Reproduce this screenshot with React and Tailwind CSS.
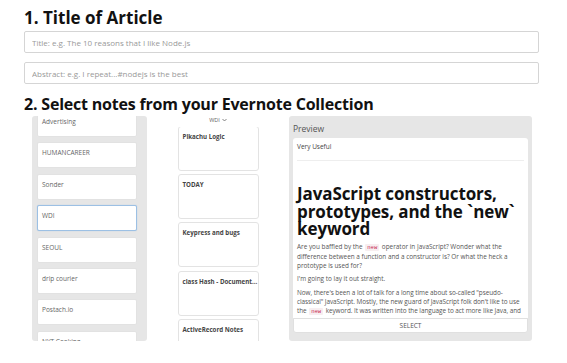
import React from "react";

const NOTEBOOKS = [
  "Advertising",
  "HUMANCAREER",
  "Sonder",
  "WDI",
  "SEOUL",
  "drip courier",
  "Postach.io",
  "NYT Cooking",
];

const NOTES = [
  "Pikachu Logic",
  "TODAY",
  "Keypress and bugs",
  "class Hash - Document...",
  "ActiveRecord Notes",
];

const font = { fontFamily: '"Open Sans", "Noto Sans", sans-serif' };

function Code({ children }) {
  return (
    <code className="px-[2px] mx-[1px] rounded-[1px] bg-[#f7eef0] text-[#c7254e] text-[5.5px] font-['Liberation_Mono',monospace]">
      {children}
    </code>
  );
}

export default function App() {
  return (
    <div className="w-[567px] h-[363px] bg-white overflow-hidden" style={font}>
      <div className="pl-[24px] w-[539px] pt-[7px]">
        <h1 className="text-[17px] leading-[22px] font-bold text-[#111]">1. Title of Article</h1>
        <input
          className="block mt-[2px] w-full h-[22px] border border-[#d5d5d5] rounded-[2px] px-[7px] text-[8px] text-[#555] placeholder:text-[#999] outline-none"
          placeholder="Title: e.g. The 10 reasons that I like Node.js"
        />
        <input
          className="block mt-[9px] w-full h-[22px] border border-[#d5d5d5] rounded-[2px] px-[7px] text-[8px] text-[#555] placeholder:text-[#999] outline-none"
          placeholder="Abstract: e.g. I repeat...#nodejs is the best"
        />
        <h2 className="mt-[9px] text-[16px] leading-[22px] font-bold text-[#111] tracking-[-0.2px]">
          2. Select notes from your Evernote Collection
        </h2>

        <div className="flex mt-[1px] h-[225px]">
          {/* notebooks */}
          <div className="ml-[8px] w-[115px] h-full bg-[#e6e6e6] rounded-[3px] overflow-hidden pl-[5px]">
            <div className="-mt-[5px] flex flex-col gap-[5.4px]">
              {NOTEBOOKS.map((n) => (
                <div
                  key={n}
                  className={
                    "w-[100px] h-[26px] shrink-0 bg-white rounded-[2px] pl-[4px] pt-[5px] text-[6.5px] leading-[9px] text-[#666] border " +
                    (n === "WDI" ? "border-[#9cc0e4] shadow-[0_0_1px_#9cc0e4]" : "border-[#e2e2e2]")
                  }
                >
                  {n}
                </div>
              ))}
            </div>
          </div>

          {/* notes */}
          <div className="w-[142px] h-full flex flex-col items-center">
            <div className="h-[11px] flex items-start gap-[2px] text-[5.5px] leading-[8px] text-[#666]">
              WDI
              <svg className="mt-[2px]" width="5" height="4" viewBox="0 0 10 6" fill="none" stroke="#666" strokeWidth="1.6">
                <path d="M1 1l4 4 4-4" />
              </svg>
            </div>
            <div className="flex-1 overflow-hidden">
              <div className="-mt-[1px] flex flex-col gap-[3.2px]">
                {NOTES.map((n) => (
                  <div
                    key={n}
                    className="w-[81px] h-[45px] shrink-0 bg-white border border-[#e3e3e3] rounded-[3px] pl-[4px] pt-[5px] text-[6.2px] leading-[9px] font-bold text-[#444]"
                  >
                    {n}
                  </div>
                ))}
              </div>
            </div>
          </div>

          {/* preview */}
          <div className="w-[243px] h-full bg-[#e6e6e6] rounded-[3px] px-[4px] pb-[8px] flex flex-col">
            <div className="h-[22px] pt-[7px] text-[8.5px] leading-[12px] text-[#555]">Preview</div>
            <div className="h-[180px] bg-white rounded-t-[3px] overflow-hidden px-[4px]">
              <div className="pt-[4px] text-[6.5px] leading-[10px] text-[#444]">Very Useful</div>
              <div className="mt-[8px] border-t border-[#eee]" />
              <h3 className="mt-[24px] text-[17px] leading-[17.5px] font-bold text-[#111] tracking-[-0.1px]">
                JavaScript constructors, prototypes, and the `new` keyword
              </h3>
              <p className="mt-[4px] text-[6.4px] leading-[9.3px] text-[#555]">
                Are you baffled by the <Code>new</Code> operator in JavaScript? Wonder what the difference between a
                function and a constructor is? Or what the heck a prototype is used for?
              </p>
              <p className="mt-[4px] text-[6.4px] leading-[9.3px] text-[#555]">I'm going to lay it out straight.</p>
              <p className="mt-[4px] text-[6.4px] leading-[9.3px] text-[#555] tracking-[-0.05px]">
                Now, there's been a lot of talk for a long time about so-called "pseudo-classical" JavaScript. Mostly,
                the new guard of JavaScript folk don't like to use the <Code>new</Code> keyword. It was written into the
                language to act more like Java, and
              </p>
            </div>
            <button className="h-[15px] leading-[13px] bg-white border border-[#e0e0e0] rounded-b-[3px] text-[6.5px] text-[#555]">
              SELECT
            </button>
          </div>
        </div>
      </div>
    </div>
  );
}
